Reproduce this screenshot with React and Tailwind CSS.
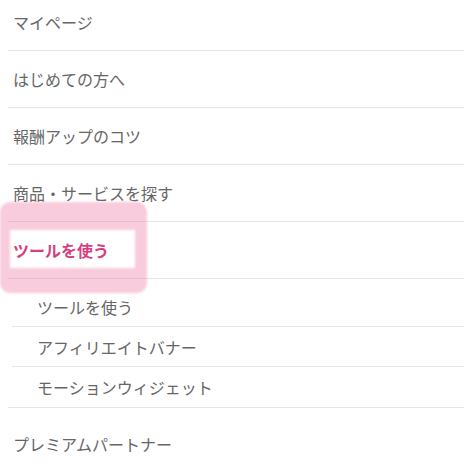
const items = ['マイページ', 'はじめての方へ', '報酬アップのコツ', '商品・サービスを探す']
const subs = ['ツールを使う', 'アフィリエイトバナー', 'モーションウィジェット']

export default function App() {
  return (
    <div
      className="relative w-[464px] h-[472px] overflow-hidden bg-white"
      style={{ fontFamily: '"Noto Sans CJK JP", "Noto Sans", sans-serif' }}
    >
      <ul className="-mt-[6px] pl-2 text-[16px] text-[#666]">
        {items.map(t => (
          <li key={t} className="h-[57px] flex items-center pl-[5px] border-b border-[#e6e6e6]">
            {t}
          </li>
        ))}

        {/* current section */}
        <li className="border-b border-[#e6e6e6]">
          <div className="h-[57px] flex items-center pl-[5px] border-b border-[#e6e6e6] font-bold text-[#d6407f]">
            ツールを使う
          </div>
          <ul className="pt-2 ml-1">
            {subs.map((t, i) => (
              <li
                key={t}
                className={`h-[40px] flex items-center pl-[25px] ${i < subs.length - 1 ? 'border-b border-[#e6e6e6]' : ''}`}
              >
                {t}
              </li>
            ))}
          </ul>
        </li>

        <li className="pt-2 h-[64px] flex items-center pl-[5px]">プレミアムパートナー</li>
      </ul>

      {/* highlighter mark */}
      <div className="absolute left-0 top-[202px] w-[147px] h-[91px] rounded-[10px] border-solid border-t-[28px] border-b-[25px] border-l-[10px] border-r-[12px] border-[rgba(236,110,160,0.36)] blur-[1px]" />
    </div>
  )
}
